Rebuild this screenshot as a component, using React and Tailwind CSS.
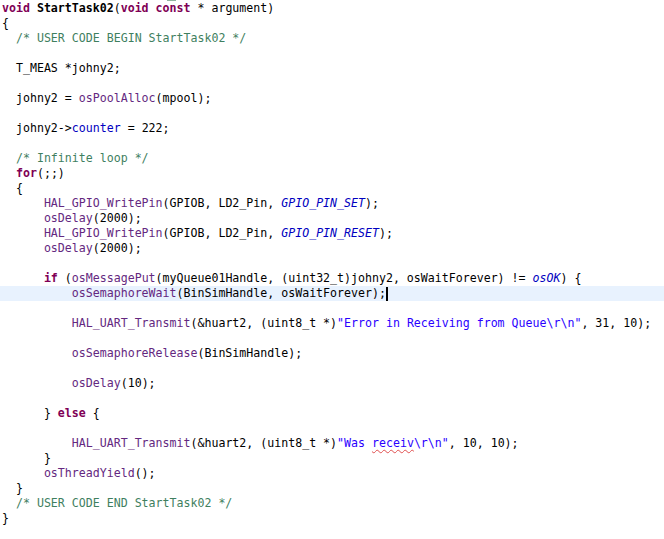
import React from "react";

// token kinds: k keyword, f function, c comment, m macro, s string, v field, d declaration name, q misspelt string
const K = (t) => [t, "k"];
const F = (t) => [t, "f"];
const C = (t) => [t, "c"];
const M = (t) => [t, "m"];
const S = (t) => [t, "s"];
const V = (t) => [t, "v"];
const D = (t) => [t, "d"];
const Q = (t) => [t, "q"];

const lines = [
  [K("void"), " ", D("StartTask02"), "(", K("void"), " ", K("const"), " * argument)"],
  ["{"],
  ["  ", C("/* USER CODE BEGIN StartTask02 */")],
  [],
  ["  T_MEAS *johny2;"],
  [],
  ["  johny2 = ", F("osPoolAlloc"), "(mpool);"],
  [],
  ["  johny2->", V("counter"), " = 222;"],
  [],
  ["  ", C("/* Infinite loop */")],
  ["  ", K("for"), "(;;)"],
  ["  {"],
  ["      ", F("HAL_GPIO_WritePin"), "(GPIOB, LD2_Pin, ", M("GPIO_PIN_SET"), ");"],
  ["      ", F("osDelay"), "(2000);"],
  ["      ", F("HAL_GPIO_WritePin"), "(GPIOB, LD2_Pin, ", M("GPIO_PIN_RESET"), ");"],
  ["      ", F("osDelay"), "(2000);"],
  [],
  ["      ", K("if"), " (", F("osMessagePut"), "(myQueue01Handle, (uint32_t)johny2, osWaitForever) != ", M("osOK"), ") {"],
  ["          ", F("osSemaphoreWait"), "(BinSimHandle, osWaitForever);"],
  [],
  ["          ", F("HAL_UART_Transmit"), "(&huart2, (uint8_t *)", S('"Error in Receiving from Queue\\r\\n"'), ", 31, 10);"],
  [],
  ["          ", F("osSemaphoreRelease"), "(BinSimHandle);"],
  [],
  ["          ", F("osDelay"), "(10);"],
  [],
  ["      } ", K("else"), " {"],
  [],
  ["          ", F("HAL_UART_Transmit"), "(&huart2, (uint8_t *)", S('"Was '), Q("receiv"), S('\\r\\n"'), ", 10, 10);"],
  ["      }"],
  ["      ", F("osThreadYield"), "();"],
  ["  }"],
  ["  ", C("/* USER CODE END StartTask02 */")],
  ["}"],
];

const styles = {
  k: "font-bold text-[#7f0055]",
  f: "text-[#642880]",
  c: "text-[#3f7f5f]",
  m: "italic text-[#0000c0]",
  s: "text-[#2a00ff]",
  v: "text-[#0000c0]",
  d: "font-bold text-black",
  q: "text-[#2a00ff] underline decoration-wavy decoration-[#e05050] decoration-1 underline-offset-2",
};

const CURRENT = 19;

const Token = ({ tok }) => {
  if (typeof tok === "string") return <span>{tok}</span>;
  const [text, kind] = tok;
  return <span className={styles[kind]}>{text}</span>;
};

export default function App() {
  return (
    <div
      className="w-[664px] h-[539px] overflow-hidden bg-white text-black text-[11.6px] leading-[15px]"
      style={{ fontFamily: '"DejaVu Sans Mono", "Liberation Mono", monospace' }}
    >
      <div className="h-px">
        <div className="ml-[167px] w-[9px] h-px bg-[#8fb39f]" />
      </div>
      {lines.map((line, i) => (
        <div
          key={i}
          className={`h-[15px] pl-[2px] whitespace-pre flex items-center ${
            i === CURRENT ? "bg-[#e8f2fe]" : ""
          }`}
        >
          {line.map((tok, j) => (
            <Token key={j} tok={tok} />
          ))}
          {i === CURRENT && <span className="inline-block w-[2px] h-[14px] bg-black" />}
        </div>
      ))}
    </div>
  );
}
